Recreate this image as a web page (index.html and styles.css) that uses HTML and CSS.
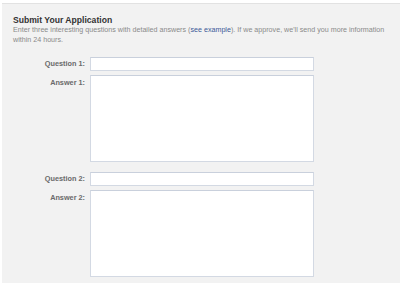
FILE: index.html
```html
<!DOCTYPE html>
<html>
<head>
<meta charset="utf-8">
<link rel="stylesheet" href="styles.css">
</head>
<body>
<div class="panel">
  <h2 class="title">Submit Your Application</h2>
  <p class="desc">Enter three interesting questions with detailed answers (<a href="#">see example</a>). If we approve, we'll send you more information within 24 hours.</p>
  <div class="form">
    <label class="label">Question 1:</label>
    <input class="field" type="text">
    <label class="label label-top">Answer 1:</label>
    <textarea class="area"></textarea>
    <label class="label next">Question 2:</label>
    <input class="field next" type="text">
    <label class="label label-top">Answer 2:</label>
    <textarea class="area"></textarea>
  </div>
</div>
</body>
</html>
```
FILE: styles.css
```css
html, body {
  margin: 0;
  padding: 0;
  background: #ffffff;
}
body {
  padding: 3px 0 0 2px;
  height: 285px;
  box-sizing: border-box;
  overflow: hidden;
}
.panel {
  background: #f2f2f2;
  border-top: 1px solid #e2e2e2;
  height: 280px;
  padding: 11px 0 0 11px;
  box-sizing: border-box;
  font-family: "Liberation Sans", Arial, sans-serif;
}
.title {
  margin: 0;
  font-size: 8.6px;
  line-height: 10px;
  font-weight: bold;
  color: #333333;
}
.desc {
  margin: 0;
  font-size: 7.15px;
  line-height: 10px;
  color: #8a8a8a;
  width: 384px;
}
.desc a {
  color: #3b5998;
  text-decoration: none;
}
.form {
  display: grid;
  grid-template-columns: 72px 224px;
  column-gap: 5px;
  row-gap: 4px;
  margin-top: 12px;
  align-items: start;
}
.label {
  text-align: right;
  font-size: 7.3px;
  font-weight: bold;
  color: #6a6a6a;
  line-height: 14px;
}
.label-top {
  line-height: 10px;
  padding-top: 3px;
}
.field, .area {
  margin: 0;
  box-sizing: border-box;
  width: 224px;
  background: #ffffff;
  border: 1px solid #d3d9e3;
  border-top-color: #c9d0dc;
  padding: 0;
  font: inherit;
  outline: none;
}
.field {
  height: 14px;
}
.area {
  height: 87px;
  resize: none;
  display: block;
}
.next {
  margin-top: 6px;
}
```
